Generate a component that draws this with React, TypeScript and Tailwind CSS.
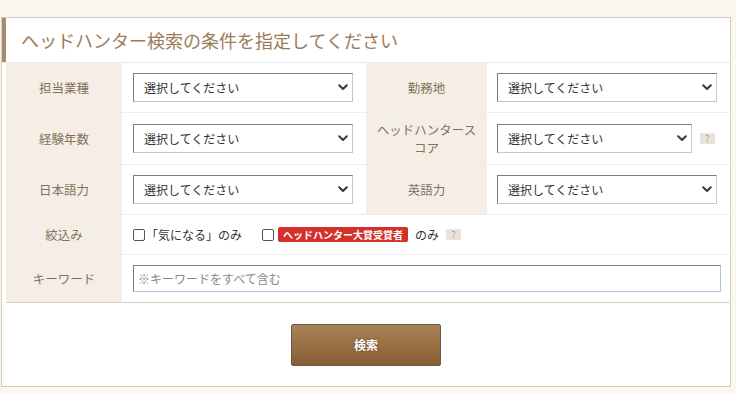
import React from "react";

const FONT = '"Noto Sans CJK JP", "Noto Sans", "Liberation Sans", sans-serif';

function Chevron() {
  return (
    <svg width="10" height="7" viewBox="0 0 10 7" className="shrink-0">
      <polyline points="1.2,1.2 5,5 8.8,1.2" fill="none" stroke="#3a3a3a" strokeWidth="2" strokeLinecap="round" strokeLinejoin="round" />
    </svg>
  );
}

function Select({ w = "w-[220px]" }: { w?: string }) {
  return (
    <div
      className={`${w} h-[29px] flex items-center justify-between bg-white border border-t-[#7c7c7c] border-l-[#7c7c7c] border-r-[#c6c6c6] border-b-[#c6c6c6] pl-[10px] pr-[4px] text-[12px] text-[#333]`}
    >
      <span>選択してください</span>
      <Chevron />
    </div>
  );
}

function Help() {
  return (
    <span className="inline-flex items-center justify-center w-[15px] h-[11px] bg-[#ebe3da] text-[9px] leading-none text-[#a99d90]">
      ?
    </span>
  );
}

function Label({ children }: { children: React.ReactNode }) {
  return (
    <div className="flex items-center justify-center text-center bg-[#f4eee6] text-[12.5px] leading-[18px] text-[#86705a]">
      {children}
    </div>
  );
}

function Checkbox() {
  return <span className="inline-block w-[12px] h-[12px] rounded-[2px] border border-[#555] bg-white shrink-0" />;
}

export default function App() {
  return (
    <div className="min-h-screen bg-[#faf7f1] pt-[17px] pl-[1px]" style={{ fontFamily: FONT }}>
      <div className="w-[730px] bg-white border border-[#d6cbb9]">
        {/* header */}
        <div className="flex h-[45px] border-b border-[#ebebeb]">
          <div className="w-[4px] bg-[#a68d6c]" />
          <div className="flex items-center pl-[15px] text-[18px] text-[#9c7b57]">
            ヘッドハンター検索の条件を指定してください
          </div>
        </div>

        {/* table */}
        <div className="pl-[4px] pr-[1px]">
          <div className="grid grid-cols-[116px_244px_121px_1fr] h-[50px] border-b border-[#f0ebe5]">
            <Label>担当業種</Label>
            <div className="flex items-center pl-[11px]">
              <Select />
            </div>
            <Label>勤務地</Label>
            <div className="flex items-center pl-[10px]">
              <Select />
            </div>
          </div>

          <div className="grid grid-cols-[116px_244px_121px_1fr] h-[52px] border-b border-[#f0ebe5]">
            <Label>経験年数</Label>
            <div className="flex items-center pl-[11px]">
              <Select />
            </div>
            <Label>
              <div className="flex flex-col items-center">
                <span>ヘッドハンタース</span>
                <span>コア</span>
              </div>
            </Label>
            <div className="flex items-center pl-[10px] gap-[8px]">
              <Select w="w-[195px]" />
              <Help />
            </div>
          </div>

          <div className="grid grid-cols-[116px_244px_121px_1fr] h-[50px] border-b border-[#f0ebe5]">
            <Label>日本語力</Label>
            <div className="flex items-center pl-[11px]">
              <Select />
            </div>
            <Label>英語力</Label>
            <div className="flex items-center pl-[10px]">
              <Select />
            </div>
          </div>

          <div className="grid grid-cols-[116px_1fr] h-[40px] border-b border-[#f0ebe5]">
            <Label>絞込み</Label>
            <div className="flex items-center pl-[11px] text-[12px] text-[#333]">
              <Checkbox />
              <span className="ml-[1px]">「気になる」のみ</span>
              <span className="ml-[20px]" />
              <Checkbox />
              <span className="ml-[4px] inline-flex items-center h-[15px] px-[5px] rounded-[2px] bg-[#d4302b] text-white text-[10px] font-bold">
                ヘッドハンター大賞受賞者
              </span>
              <span className="ml-[7px]">のみ</span>
              <span className="ml-[7px] flex">
                <Help />
              </span>
            </div>
          </div>

          <div className="grid grid-cols-[116px_1fr] h-[48px] border-b border-[#d6cbb9]">
            <Label>キーワード</Label>
            <div className="flex items-center pl-[11px] pr-[8px]">
              <div className="w-full h-[27px] flex items-center border border-t-[#7c7c7c] border-l-[#7c7c7c] border-r-[#b9c4cf] border-b-[#b9c4cf] pl-[4px] text-[12px] text-[#8a8a8a]">
                ※キーワードをすべて含む
              </div>
            </div>
          </div>
        </div>

        {/* button area */}
        <div className="flex justify-center pt-[21px] pb-[20px]">
          <button className="w-[150px] h-[42px] rounded-[2px] border border-[#6e583f] bg-gradient-to-b from-[#a88359] to-[#885c31] text-white text-[12px] font-bold [text-shadow:0_0_2px_rgba(60,35,10,0.6)]">
            検索
          </button>
        </div>
      </div>
    </div>
  );
}
